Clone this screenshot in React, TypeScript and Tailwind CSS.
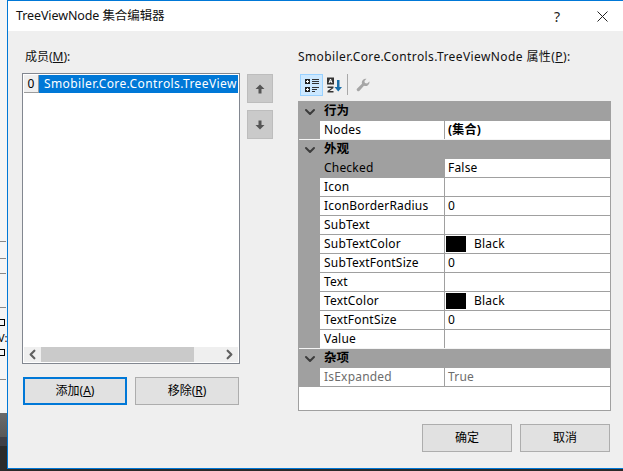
import { ChevronDown, ChevronLeft, ChevronRight } from 'lucide-react';

const font = "font-['Noto_Sans','Noto_Sans_CJK_SC',sans-serif]";

function Category({ label }: { label: string }) {
  return (
    <div className="flex h-[19px] items-center bg-[#a0a0a0] font-bold text-black">
      <span className="flex w-[21px] justify-center">
        <ChevronDown size={16} strokeWidth={3} className="text-[#3c3c3c]" />
      </span>
      <span className="pl-[4px] text-[12.5px] leading-none">{label}</span>
    </div>
  );
}

function Row({ name, value, swatch, bold, grey, nameGrey, last }: { name: string; value?: string; swatch?: boolean; bold?: boolean; grey?: boolean; nameGrey?: boolean; last?: boolean }) {
  return (
    <div className={`flex h-[19px] border-b bg-[#a0a0a0] ${last ? 'border-[#f4f4f4]' : 'border-[#a0a0a0]'}`}>
      <div className="w-[21px]" />
      <div className="flex flex-1 bg-white">
        <div className={`flex w-[124px] items-center pl-[4px] tracking-[.2px] ${grey ? 'text-[#6d6d6d]' : 'text-black'} ${nameGrey ? 'bg-[#a0a0a0]' : 'bg-white'}`}>{name}</div>
        <div className={`flex flex-1 items-center border-l border-[#a0a0a0] bg-white pl-[3px] tracking-[.2px] ${bold ? 'font-bold' : ''} ${grey ? 'text-[#6d6d6d]' : 'text-black'}`}>
          {swatch && <span className="mr-[8px] ml-[-2px] h-[16px] w-[20px] bg-black" />}
          {value}
        </div>
      </div>
    </div>
  );
}

function ArrowButton({ down }: { down?: boolean }) {
  return (
    <div className="flex h-[29px] w-[26px] items-center justify-center border border-[#bdbdbd] bg-[#cacaca]">
      <svg width="10" height="10" viewBox="0 0 10 10" className={down ? 'rotate-180' : ''}>
        <path d="M5 0.5 L9.5 5 L6.5 5 L6.5 9.5 L3.5 9.5 L3.5 5 L0.5 5 Z" fill="#555555" />
      </svg>
    </div>
  );
}

function DialogButton({ children, focused, className }: { children: React.ReactNode; focused?: boolean; className?: string }) {
  return (
    <div className={`flex h-[28px] items-center justify-center bg-[#e1e1e1] text-black ${focused ? 'border-2 border-[#0078d7]' : 'border border-[#adadad]'} ${className ?? ''}`}>
      {children}
    </div>
  );
}

export default function App() {
  return (
    <div className={`flex h-[471px] w-[623px] overflow-hidden bg-[#2a2a2a] text-[12px] ${font}`}>
      {/* window behind the dialog */}
      <div className="flex w-[7px] flex-col">
        <div className="flex h-[413px] flex-col bg-[#f5f5f5]">
          <div className="mt-[241px] h-px w-[6px] border-t border-dashed border-[#888888]" />
          <div className="mt-[16px] h-px w-[6px] border-t border-dashed border-[#888888]" />
          <div className="mt-[14px] h-px w-[6px] border-t border-dashed border-[#888888]" />
          <div className="mt-[33px] h-px w-[6px] border-t border-dashed border-[#888888]" />
          <div className="mt-[11px] h-[7px] w-[5px] border-y border-r border-black" />
          <div className="h-[23px] overflow-hidden whitespace-nowrap text-[11px] leading-[23px] text-black"><span className="ml-[-2px] block">V:</span></div>
          <div className="h-[7px] w-[5px] border-y border-r border-black" />
          <div className="mt-[23px] h-px w-[6px] border-t border-dashed border-[#888888]" />
        </div>
        <div className="h-[24px] bg-gradient-to-b from-[#6a6a6a] to-[#585858]" />
        <div className="h-[9px] bg-[#3f3f46]" />
        <div className="flex-1 bg-[#2b2b2b]" />
      </div>

      <div className="flex h-[469px] flex-1 flex-col border-b border-l border-t border-[#0078d7] bg-[#efefef]">
        <div className="flex h-[30px] items-center bg-white pl-[8px] pr-[15px]">
          <span className="flex-1 text-[12.5px] tracking-[-.1px] text-[#111111]">TreeViewNode 集合编辑器</span>
          <span className="mr-[37px] text-[14px] text-[#222222]">?</span>
          <svg width="11" height="11" viewBox="0 0 11 11">
            <path d="M0.5 0.5 L10.5 10.5 M10.5 0.5 L0.5 10.5" stroke="#222222" strokeWidth="1" />
          </svg>
        </div>

        <div className="flex flex-1 pl-[14px] pt-[17px]">
          <div className="flex w-[252px] flex-col">
            <div className="h-[25px] pl-[3px] leading-[17px] text-[#111111]">
              成员(<span className="underline">M</span>):
            </div>
            <div className="flex">
              <div className="flex h-[291px] w-[218px] flex-col border border-[#828790] bg-white p-px">
                <div className="flex h-[18px]">
                  <span className="flex w-[15px] items-center justify-center border-b border-r border-[#9c9c9c] bg-[#efefef] text-black">0</span>
                  <span className="flex flex-1 items-center overflow-hidden whitespace-nowrap bg-[#0078d7] pl-[5px] tracking-[.4px] text-white">Smobiler.Core.Controls.TreeView</span>
                </div>
                <div className="flex-1" />
                <div className="flex h-[15px] items-center bg-[#efefef]">
                  <span className="flex w-[17px] justify-center"><ChevronLeft size={15} strokeWidth={3.5} className="text-[#606060]" /></span>
                  <span className="h-full w-[153px] bg-[#cacaca]" />
                  <span className="flex-1" />
                  <span className="flex w-[17px] justify-center"><ChevronRight size={15} strokeWidth={3.5} className="text-[#606060]" /></span>
                </div>
              </div>
              <div className="ml-[7px] flex flex-col gap-[7px] pt-px">
                <ArrowButton />
                <ArrowButton down />
              </div>
            </div>
            <div className="mt-[13px] flex gap-[8px] pl-px">
              <DialogButton focused className="w-[104px]"><span>添加(<span className="underline">A</span>)</span></DialogButton>
              <DialogButton className="w-[104px]"><span>移除(<span className="underline">R</span>)</span></DialogButton>
            </div>
          </div>

          <div className="ml-[24px] flex w-[313px] flex-col">
            <div className="h-[25px] leading-[17px] tracking-[.4px] text-[#111111]">
              Smobiler.Core.Controls.TreeViewNode 属性(<span className="underline">P</span>):
            </div>
            <div className="flex h-[28px] items-start pl-[2px] pt-px">
              <div className="flex h-[22px] w-[23px] items-center justify-center border border-[#99d1ff] bg-[#cce8ff]">
                <svg width="16" height="15" viewBox="0 0 16 15">
                  <path d="M1 1h5v5h-5z M1 9h5v5h-5z" fill="#222222" />
                  <path d="M2 3.5h3M3.5 2v3M2 11.5h3M3.5 10v3" stroke="#ffffff" strokeWidth="1" />
                  <path d="M8 1.5h7M8 3.5h7M8 5.5h7M8 9.5h7M8 11.5h5M8 13.5h3" stroke="#333333" strokeWidth="1" />
                </svg>
              </div>
              <div className="flex h-[22px] w-[23px] items-center justify-center">
                <svg width="17" height="16" viewBox="0 0 17 16">
                  <path d="M1 0.5h7v7h-7z" fill="#333333" />
                  <path d="M3 6l1.5-4 1.5 4M3.5 4.7h2" stroke="#ffffff" strokeWidth="1" fill="none" />
                  <path d="M1.5 9.5h6v1.5l-4 3h4v1.5h-6v-1.5l4-3h-4z" fill="#333333" />
                  <path d="M11 3h2.5v7h2.5l-3.75 4.5-3.75-4.5h2.5z" fill="#1b6ea8" />
                </svg>
              </div>
              <div className="ml-px h-[21px] w-px bg-[#a8a8a8]" />
              <div className="ml-[3px] flex h-[22px] w-[24px] items-center justify-center">
                <svg width="14" height="14" viewBox="0 0 14 14">
                  <path d="M13.5 3.5a4 4 0 0 1-5.5 4.2L3.5 12.7a1.6 1.6 0 0 1-2.3-2.3L6 5.8A4 4 0 0 1 10.5 .7L8.4 2.9l.5 2.1 2.2.6z" fill="#a6a6a6" />
                </svg>
              </div>
            </div>
            <div className="flex h-[310px] flex-col border border-[#a0a0a0] bg-white">
              <Category label="行为" />
              <Row name="Nodes" value="(集合)" bold last />
              <Category label="外观" />
              <Row name="Checked" value="False" nameGrey />
              <Row name="Icon" />
              <Row name="IconBorderRadius" value="0" />
              <Row name="SubText" />
              <Row name="SubTextColor" value="Black" swatch />
              <Row name="SubTextFontSize" value="0" />
              <Row name="Text" />
              <Row name="TextColor" value="Black" swatch />
              <Row name="TextFontSize" value="0" />
              <Row name="Value" last />
              <Category label="杂项" />
              <Row name="IsExpanded" value="True" grey />
            </div>
            <div className="mt-[13px] flex justify-end gap-[8px] pr-px">
              <DialogButton className="w-[90px]">确定</DialogButton>
              <DialogButton className="w-[90px]">取消</DialogButton>
            </div>
          </div>
        </div>
      </div>
    </div>
  );
}
